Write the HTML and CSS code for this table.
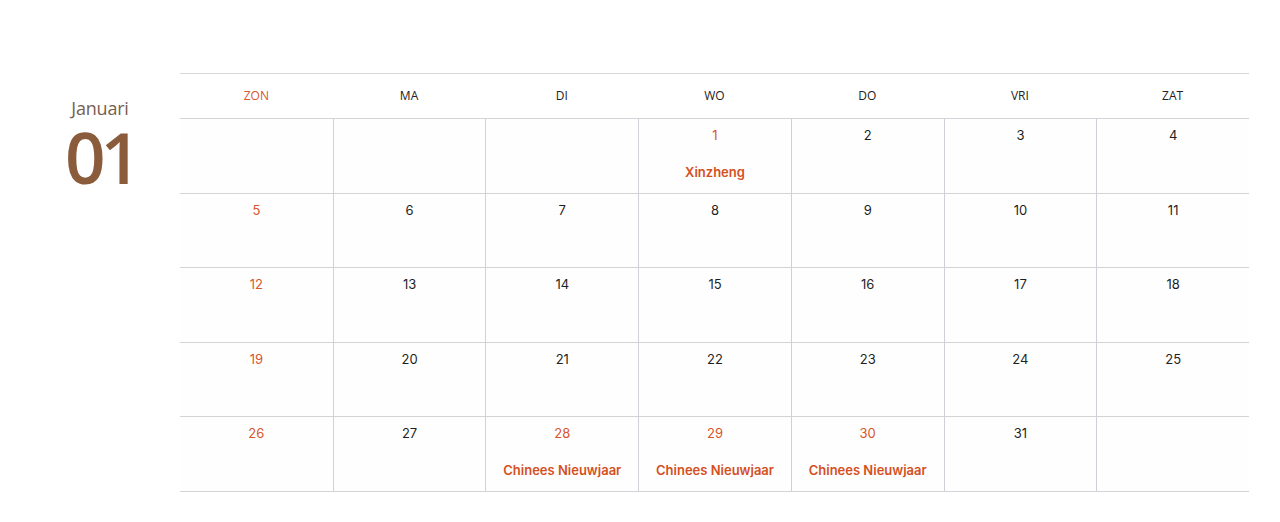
FILE: index.html
```html
<!DOCTYPE html>
<html lang="nl">
<head>
<meta charset="utf-8">
<title>Januari</title>
<link rel="stylesheet" href="styles.css">
</head>
<body>
<div class="page">
  <div class="month">
    <div class="month-name">Januari</div>
    <div class="month-num">01</div>
  </div>
  <div class="cal">
    <div class="head sun">ZON</div>
    <div class="head">MA</div>
    <div class="head">DI</div>
    <div class="head">WO</div>
    <div class="head">DO</div>
    <div class="head">VRI</div>
    <div class="head">ZAT</div>

    <div class="cell"></div>
    <div class="cell"></div>
    <div class="cell"></div>
    <div class="cell"><span class="num red">1</span><span class="hol">Xinzheng</span></div>
    <div class="cell"><span class="num">2</span></div>
    <div class="cell"><span class="num">3</span></div>
    <div class="cell"><span class="num">4</span></div>

    <div class="cell"><span class="num red">5</span></div>
    <div class="cell"><span class="num">6</span></div>
    <div class="cell"><span class="num">7</span></div>
    <div class="cell"><span class="num">8</span></div>
    <div class="cell"><span class="num">9</span></div>
    <div class="cell"><span class="num">10</span></div>
    <div class="cell"><span class="num">11</span></div>

    <div class="cell"><span class="num red">12</span></div>
    <div class="cell"><span class="num">13</span></div>
    <div class="cell"><span class="num">14</span></div>
    <div class="cell"><span class="num">15</span></div>
    <div class="cell"><span class="num">16</span></div>
    <div class="cell"><span class="num">17</span></div>
    <div class="cell"><span class="num">18</span></div>

    <div class="cell"><span class="num red">19</span></div>
    <div class="cell"><span class="num">20</span></div>
    <div class="cell"><span class="num">21</span></div>
    <div class="cell"><span class="num">22</span></div>
    <div class="cell"><span class="num">23</span></div>
    <div class="cell"><span class="num">24</span></div>
    <div class="cell"><span class="num">25</span></div>

    <div class="cell"><span class="num red">26</span></div>
    <div class="cell"><span class="num">27</span></div>
    <div class="cell"><span class="num red">28</span><span class="hol">Chinees Nieuwjaar</span></div>
    <div class="cell"><span class="num red">29</span><span class="hol">Chinees Nieuwjaar</span></div>
    <div class="cell"><span class="num red">30</span><span class="hol">Chinees Nieuwjaar</span></div>
    <div class="cell"><span class="num">31</span></div>
    <div class="cell"></div>
  </div>
</div>
</body>
</html>
```

FILE: styles.css
```css
html, body {
  margin: 0;
  padding: 0;
  background: #ffffff;
}

.page {
  display: flex;
  padding-top: 73px;
  height: 449px;
}

.month {
  width: 180px;
  flex: none;
  display: flex;
  flex-direction: column;
  align-items: center;
  padding-top: 23px;
  padding-left: 20px;
  box-sizing: border-box;
}

.month-name {
  font-family: "Open Sans", sans-serif;
  font-size: 18px;
  line-height: 24px;
  color: #77604f;
  letter-spacing: -0.2px;
}

.month-num {
  font-family: "Open Sans", sans-serif;
  font-weight: 600;
  font-size: 71px;
  line-height: 56px;
  color: #8a5c3c;
  letter-spacing: -5px;
  margin-left: 1px;
  margin-top: 9px;
}

.cal {
  width: 1069px;
  height: 419px;
  box-sizing: border-box;
  display: grid;
  grid-template-columns: repeat(7, 1fr);
  grid-template-rows: 45px repeat(5, 1fr);
  border-top: 1px solid #d6d6d8;
}

.head {
  display: flex;
  align-items: center;
  justify-content: center;
  font-family: "Open Sans", sans-serif;
  font-size: 12px;
  color: #222222;
  border-bottom: 1px solid #d4d3d8;
  padding-bottom: 1px;
}

.head.sun {
  color: #d6572c;
}

.cell {
  display: flex;
  flex-direction: column;
  align-items: center;
  border-bottom: 1px solid #d4d3d8;
  border-left: 1px solid #d2cfd8;
  padding-top: 8px;
  background: #fefefe;
}

.cell:nth-child(7n+1) {
  border-left: none;
}

.num {
  font-family: "Inter", sans-serif;
  font-size: 13px;
  line-height: 16px;
  color: #1f1f1f;
}

.num.red {
  color: #d9552b;
}

.hol {
  font-family: "Inter", sans-serif;
  font-weight: 600;
  font-size: 13px;
  line-height: 16px;
  color: #d4501f;
  margin-top: 21px;
}
```
